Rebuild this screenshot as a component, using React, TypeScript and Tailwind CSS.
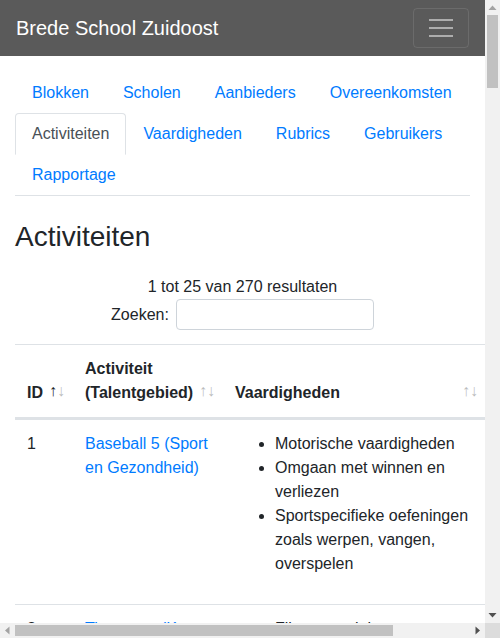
import React from "react";

type Row = {
  id: number;
  name: string;
  skills: string[];
  blok: string;
};

const rows: Row[] = [
  { id: 1, name: "Baseball 5 (Sport en Gezondheid)", skills: ["Motorische vaardigheden", "Omgaan met winnen en verliezen", "Sportspecifieke oefeningen zoals werpen, vangen, overspelen"], blok: "Blok 1" },
  { id: 2, name: "Timmeren (Kunst en Cultuur)", skills: ["Fijne motoriek", "Creatief denken", "Samenwerken"], blok: "Blok 1" },
  { id: 3, name: "Streetdance (Sport en Gezondheid)", skills: ["Ritmegevoel", "Motorische vaardigheden", "Zelfvertrouwen"], blok: "Blok 2" },
  { id: 4, name: "Koken (Natuur en Techniek)", skills: ["Samenwerken", "Gezonde voeding", "Plannen en organiseren"], blok: "Blok 2" },
  { id: 5, name: "Theater (Kunst en Cultuur)", skills: ["Presenteren", "Inlevingsvermogen", "Samenwerken"], blok: "Blok 1" },
  { id: 6, name: "Programmeren (Natuur en Techniek)", skills: ["Logisch denken", "Probleemoplossend vermogen", "Doorzettingsvermogen"], blok: "Blok 3" },
  { id: 7, name: "Voetbal (Sport en Gezondheid)", skills: ["Motorische vaardigheden", "Omgaan met winnen en verliezen", "Samenspelen"], blok: "Blok 3" },
  { id: 8, name: "Schilderen (Kunst en Cultuur)", skills: ["Creatief denken", "Fijne motoriek"], blok: "Blok 2" },
  { id: 9, name: "Tuinieren (Natuur en Techniek)", skills: ["Verantwoordelijkheid", "Kennis van de natuur", "Samenwerken"], blok: "Blok 4" },
  { id: 10, name: "Judo (Sport en Gezondheid)", skills: ["Zelfbeheersing", "Respect voor de ander", "Motorische vaardigheden"], blok: "Blok 4" },
  { id: 11, name: "Muziek maken (Kunst en Cultuur)", skills: ["Ritmegevoel", "Samenspelen", "Luisteren"], blok: "Blok 1" },
  { id: 12, name: "Robotica (Natuur en Techniek)", skills: ["Logisch denken", "Samenwerken", "Onderzoeken en ontwerpen"], blok: "Blok 2" },
];

const tabs = ["Blokken", "Scholen", "Aanbieders", "Overeenkomsten", "Activiteiten", "Vaardigheden", "Rubrics", "Gebruikers", "Rapportage"];

function SortTh({ children, active }: { children: React.ReactNode; active?: boolean }) {
  return (
    <th className="relative p-3 pr-[30px] text-left align-bottom font-bold border-t border-b-2 border-[#dee2e6]">
      {children}
      <span className={active ? "absolute right-4 bottom-[14px] leading-6 opacity-100" : "absolute right-4 bottom-[14px] leading-6 opacity-30"}>↑</span>
      <span className="absolute right-2 bottom-[14px] leading-6 opacity-30">↓</span>
    </th>
  );
}

// browser scrollbars, drawn since the screenshot shows them
function VScrollbar() {
  return (
    <div className="flex w-[15px] flex-col bg-[#f1f1f1]">
      <svg width="15" height="15" className="shrink-0">
        <polygon points="3.5,10 11.5,10 7.5,5.5" fill="#a3a3a3" />
      </svg>
      <div className="ml-[2px] h-[73px] w-[11px] bg-[#c1c1c1]" />
      <div className="flex-1" />
      <svg width="15" height="15" className="shrink-0">
        <polygon points="3.5,5 11.5,5 7.5,9.5" fill="#505050" />
      </svg>
    </div>
  );
}

function HScrollbar() {
  return (
    <div className="flex h-[15px] w-[485px] bg-[#f1f1f1]">
      <svg width="15" height="15" className="shrink-0">
        <polygon points="9.5,3.5 9.5,11.5 5,7.5" fill="#a3a3a3" />
      </svg>
      <div className="mt-[2px] h-[11px] w-[378px] bg-[#c1c1c1]" />
      <div className="flex-1" />
      <svg width="15" height="15" className="shrink-0">
        <polygon points="5.5,3.5 5.5,11.5 10,7.5" fill="#505050" />
      </svg>
    </div>
  );
}

export default function App() {
  return (
    <div className="flex h-[638px] w-[500px] flex-col overflow-hidden bg-white text-base leading-6 text-[#212529] font-['Liberation_Sans',Arial,sans-serif]">
      <div className="flex min-h-0 flex-1">
        <div className="w-[485px] overflow-hidden">
          {/* Navbar */}
          <nav className="flex h-14 items-center justify-between bg-[#5a5a5a] px-4">
            <a href="#" className="py-[5px] text-xl leading-[30px] text-white">
              Brede School Zuidoost
            </a>
            <button className="flex h-10 w-14 items-center justify-center rounded border border-white/10">
              <span className="flex w-6 flex-col gap-[6px]">
                <span className="h-[2px] bg-white/50" />
                <span className="h-[2px] bg-white/50" />
                <span className="h-[2px] bg-white/50" />
              </span>
            </button>
          </nav>

          <div className="px-[15px]">
            {/* Tabs */}
            <ul className="mt-4 flex flex-wrap border-b border-[#dee2e6]">
              {tabs.map((t) => (
                <li key={t} className="-mb-px">
                  {t === "Activiteiten" ? (
                    <a href="#" className="block rounded-t border border-[#dee2e6] border-b-white bg-white px-4 py-2 text-[#495057]">
                      {t}
                    </a>
                  ) : (
                    <a href="#" className="block rounded-t border border-transparent px-4 py-2 text-[#007bff]">
                      {t}
                    </a>
                  )}
                </li>
              ))}
            </ul>

            <h3 className="mt-6 mb-2 text-[28px] leading-[1.2] font-normal">Activiteiten</h3>

            <div className="pt-[13.6px] text-center">1 tot 25 van 270 resultaten</div>
            <div className="flex h-[31px] items-center justify-center gap-[7px]">
              <label>Zoeken:</label>
              <input className="h-[31px] w-[198px] rounded border border-[#ced4da] px-2 text-sm" />
            </div>

            {/* Table */}
            <table className="mt-[14px] mb-4 w-[554px] table-fixed border-separate border-spacing-0">
              <colgroup>
                <col className="w-[58px]" />
                <col className="w-[150px]" />
                <col className="w-[263px]" />
                <col className="w-[83px]" />
              </colgroup>
              <thead>
                <tr>
                  <SortTh active>ID</SortTh>
                  <SortTh>Activiteit (Talentgebied)</SortTh>
                  <SortTh>Vaardigheden</SortTh>
                  <SortTh>Blok</SortTh>
                </tr>
              </thead>
              <tbody>
                {rows.map((r) => (
                  <tr key={r.id}>
                    <td className="border-t border-[#dee2e6] p-3 align-top">{r.id}</td>
                    <td className="border-t border-[#dee2e6] p-3 align-top">
                      <a href="#" className="text-[#007bff]">{r.name}</a>
                    </td>
                    <td className="border-t border-[#dee2e6] p-3 align-top">
                      <ul className="mb-4 list-disc pl-10">
                        {r.skills.map((s) => (
                          <li key={s}>{s}</li>
                        ))}
                      </ul>
                    </td>
                    <td className="border-t border-[#dee2e6] p-3 align-top">{r.blok}</td>
                  </tr>
                ))}
              </tbody>
            </table>
          </div>
        </div>
        <VScrollbar />
      </div>
      <div className="flex">
        <HScrollbar />
        <div className="h-[15px] w-[15px] bg-[#dcdcdc]" />
      </div>
    </div>
  );
}
